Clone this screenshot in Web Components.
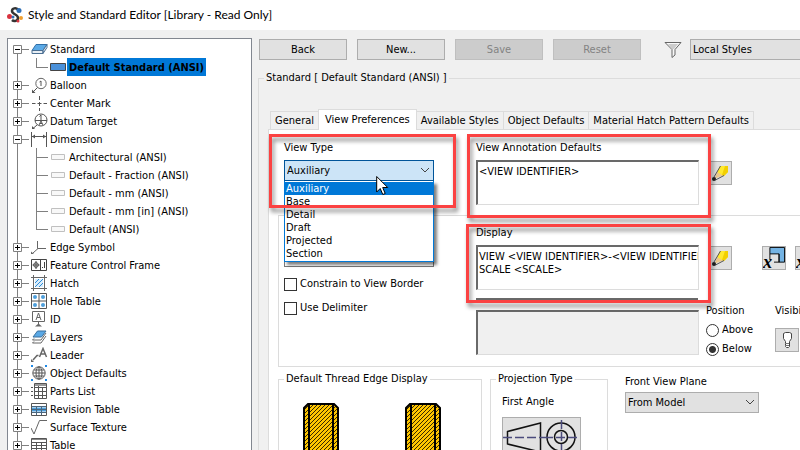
<!DOCTYPE html>
<html lang="en">
<head>
<meta charset="utf-8">
<title>Style and Standard Editor</title>
<style>
:root {
    --line: #dcdcdc;
    --face: #e1e1e1;
    --edge: #adadad;
    --accent: #0078d7;
}

body {
    margin: 0;
    height: 100vh;
    overflow: hidden;
    background: #f0f0f0;
    color: #000;
    font: 11px/14px "DejaVu Sans Condensed", "DejaVu Sans", sans-serif;
}
</style>
</head>
<body>
<style-editor></style-editor>

<script>
const ICONS = {
    standard: `<path d="M5 3.500h11l-4 6H1z" fill="#5aa9e6" stroke="#2f6fa8"/><path d="M1 9.500v3h11v-3zM12 9.500l4-6v3l-4 6z" fill="#e8eef4" stroke="#4b6f92"/>`,
    style_on: `<path d="M.5 4.500h15v7H.5z" fill="#4a90d9" stroke="#444"/>`,
    style_off: `<path d="M1.500 5.500h13v5h-13z" fill="#f8f8f8" stroke="#c0c0c0"/>`,
    balloon: `<circle cx="10" cy="6.500" r="5.200" fill="none" stroke="#666"/><path d="M8.500 5l1.500-1v5M6.500 10.500L2 15" fill="none" stroke="#555"/><path d="M1 12.500V16h3.500z" fill="#555"/>`,
    center: `<path d="M8.500 1v4M8.500 7v4M8.500 13v3M1 8.500h3.500M6.500 8.500h4M12.500 8.500H16" stroke="#555" fill="none"/>`,
    datum: `<circle cx="10" cy="7" r="6" fill="none" stroke="#555"/><path d="M4 7.500h12M10 2v5M8.500 3.500L10 2M6 12l-4 3.500M8 12l2-4 2 4M9 10.500h2" fill="none" stroke="#555"/><path d="M1 13v3h3z" fill="#555"/>`,
    dimension: `<path d="M.5 1v15M15.500 1v15M1 5.500h14" stroke="#555"/><path d="M1 5.500l3-2v4zM15 5.500l-3-2v4z" fill="#555"/>`,
    edge: `<path d="M6.500 2v7.500H15M7 9.500L2 14" fill="none" stroke="#666"/><path d="M0 12.500V15h3z" fill="#666"/>`,
    fcf: `<path d="M.5 2.500h15v11H.5zM9.500 3v11M1.500 8h7M5 4v8" fill="none" stroke="#444"/><circle cx="5" cy="8" r="2.300" fill="none" stroke="#444"/><path d="M13.500 5v6M11 10.500h1" stroke="#444"/>`,
    hatch: `<path d="M2.500 0v16M13.500 0v16M0 2.500h16M0 13.500h16" stroke="#666"/><path d="M4 4h8v8H4z" fill="#d8ecfb"/><path d="M4 8l4-4M4 12l8-8M8 12l4-4" stroke="#2d8bd6"/>`,
    hole: `<path d="M.5.5h15v15H.5zM8 1v15M1 8h15" fill="none" stroke="#555"/><g fill="#4d9fdc"><circle cx="4" cy="4" r="2"/><circle cx="12" cy="4" r="2"/><circle cx="4" cy="12" r="2"/><circle cx="12" cy="12" r="2"/></g>`,
    id: `<path d="M1.500.5h12v10h-12zM7.500 11v4M5 9l2.500-7L10 9M6 6.500h3" fill="none" stroke="#666"/><path d="M4 15.500l3.500-3 3.500 3z" fill="#666"/>`,
    layers: `<path d="M3 12.500L1.500 14h8.500l5-7M3 9.500L1.500 11h8.500l5-7" fill="none" stroke="#666"/><path d="M6.500 2H15l-4.500 6H2z" fill="#5aa9e6" stroke="#3b6f9c"/>`,
    leader: `<path d="M8.500 10L12 1.500 15.500 10M10 7h4M7.500 8.500H6L2 13" fill="none" stroke="#666" stroke-width="1.500"/><path d="M0 12v3h3z" fill="#666"/>`,
    object: `<circle cx="8" cy="8" r="6.200" fill="none" stroke="#555"/><ellipse cx="8" cy="8" rx="3" ry="6.200" fill="none" stroke="#555"/><path d="M8 2v12M2 8h12M3 5h10M3 11h10" stroke="#555"/><path d="M0 0h2v2H0zM14 0h2v2h-2zM0 14h2v2H0zM14 14h2v2h-2z" fill="#1e88e5"/>`,
    parts: `<path d="M3.500.5h12v15h-12zM7.500 1v15M11.500 5v11M4 4.500h12M4 8.500h12M4 12.500h12" fill="none" stroke="#555"/><path d="M4 1h11v2H4z" fill="#999"/><path d="M0 4.500h2M0 8.500h2M0 12.500h2" stroke="#555"/>`,
    revision: `<path d="M.5 2.500h15v12H.5z" fill="#fff" stroke="#555"/><path d="M1 6.500h14v4H1z" fill="#4d9fdc"/><path d="M1 5.500h14M1 11.500h14M5.500 5v9M10.500 5v9M1 8.500h14" stroke="#4a6780"/>`,
    surface: `<path d="M0 9l3 6L8.500 1.500H16" fill="none" stroke="#666"/>`,
    table: `<path d="M.5 1.500h15v13H.5zM1 5.500h15M1 8.500h15M1 11.500h15M5.500 5v10M10.500 5v10" fill="none" stroke="#555"/><path d="M1 2h14v1H1z" fill="#888"/>`
};

const TREE = [
    { icon: "standard", text: "Standard", open: true, children: [
        { icon: "style_on", text: "Default Standard (ANSI)", selected: true }
    ]},
    { icon: "balloon", text: "Balloon" },
    { icon: "center", text: "Center Mark" },
    { icon: "datum", text: "Datum Target" },
    { icon: "dimension", text: "Dimension", open: true, children: [
        { icon: "style_off", text: "Architectural (ANSI)" },
        { icon: "style_off", text: "Default - Fraction (ANSI)" },
        { icon: "style_off", text: "Default - mm (ANSI)" },
        { icon: "style_off", text: "Default - mm [in] (ANSI)" },
        { icon: "style_off", text: "Default (ANSI)" }
    ]},
    { icon: "edge", text: "Edge Symbol" },
    { icon: "fcf", text: "Feature Control Frame" },
    { icon: "hatch", text: "Hatch" },
    { icon: "hole", text: "Hole Table" },
    { icon: "id", text: "ID" },
    { icon: "layers", text: "Layers" },
    { icon: "leader", text: "Leader" },
    { icon: "object", text: "Object Defaults" },
    { icon: "parts", text: "Parts List" },
    { icon: "revision", text: "Revision Table" },
    { icon: "surface", text: "Surface Texture" },
    { icon: "table", text: "Table" }
];

class BaseElement extends HTMLElement {
    connectedCallback() {
        if (!this.shadowRoot) {
            this.attachShadow({mode: "open"}).innerHTML = this.render();
        }
    }

    attr(name) {
        return (this.getAttribute(name) || "").replace(/&/g, "&amp;").replace(/</g, "&lt;").replace(/"/g, "&quot;");
    }
}

class TitleBar extends BaseElement {
    render() {
        return `
        <style>
        :host {
            display: flex;
            align-items: center;
            gap: 5px;
            flex: none;
            height: 30px;
            padding-left: 7px;
            background: #fff;
            font: 12px/16px Lato, "Noto Sans", sans-serif;
        }
        svg { flex: none; }
        </style>
        <svg width="16" height="18" viewBox="0 0 16 18">
            <path d="M11 3.500C9 1.500 5 2 5 5c0 3.500 6 3 6 7 0 3-4 4-6 2" fill="none" stroke="#333" stroke-width="2.500"/>
            <circle cx="12" cy="4.500" r="2.500" fill="#2f6fb5"/>
            <circle cx="2.500" cy="10.500" r="2.500" fill="#d9333f"/>
            <circle cx="6" cy="11" r="1.500" fill="#2f6fb5"/>
            <circle cx="14" cy="12" r="2" fill="#f0a030"/>
            <circle cx="11" cy="15" r="1.500" fill="#d9333f"/>
        </svg>
        <span><slot></slot></span>`;
    }
}

class TreeNode extends BaseElement {
    // rail: connector lines and the expander box
    rail() {
        const first = this.hasAttribute("first");
        if (!this.hasAttribute("child")) {
            const plus = this.hasAttribute("open") ? "" : "M9.500 7v5";
            return `<svg width="23" height="18" fill="none" stroke="#808080" aria-hidden="true">
                <path d="M9.500 ${first ? 9 : 0}V18M14 9.500h7"/>
                <path d="M5.500 5.500h8v8h-8z" fill="#fff"/>
                <path d="M7 9.500h5${plus}" stroke="#000"/>
            </svg>`;
        }
        return `<svg width="42" height="18" fill="none" stroke="#808080" aria-hidden="true">
            <path d="M9.500 0V18M28.500 0V${this.hasAttribute("last") ? 10 : 18}M28.500 9.500H40"/>
        </svg>`;
    }

    render() {
        return `
        <style>
        :host {
            display: flex;
            align-items: center;
            height: 18px;
            white-space: nowrap;
        }
        svg { flex: none; }
        span {
            padding: 1px 2px 0;
            line-height: 17px;
        }
        :host([aria-selected="true"]) span {
            background: var(--accent);
            font-weight: 700;
        }
        </style>
        ${this.rail()}
        <svg width="17" height="16" viewBox="0 0 17 16" aria-hidden="true">${ICONS[this.getAttribute("icon")]}</svg>
        <span><slot></slot></span>`;
    }
}

class StyleTree extends BaseElement {
    render() {
        let rows = "";
        TREE.forEach((item, i) => {
            rows += `<tree-node role="treeitem" icon="${item.icon}" ${item.open ? "open" : ""} ${i == 0 ? "first" : ""}>${item.text}</tree-node>`;
            (item.children || []).forEach((child, n) => {
                rows += `<tree-node role="treeitem" child icon="${child.icon}" ${child.selected ? 'aria-selected="true"' : ""} ${n == item.children.length - 1 ? "last" : ""}>${child.text}</tree-node>`;
            });
        });
        return `
        <style>
        :host {
            display: block;
            flex: none;
            width: 243px;
            padding-top: 1px;
            overflow: hidden;
            border: 1px solid #828790;
            border-bottom: none;
            background: #fff;
        }
        </style>
        ${rows}`;
    }
}

class PushButton extends BaseElement {
    render() {
        return `
        <style>
        :host { display: block; flex: none; width: 88px; height: 21px; }
        :host([icon]) { width: 24px; height: 24px; }
        :host([large]) { width: 79px; height: 44px; }
        button {
            display: flex;
            align-items: center;
            justify-content: center;
            box-sizing: border-box;
            width: 100%;
            height: 100%;
            padding: 0;
            border: 1px solid var(--edge);
            border-radius: 0;
            background: var(--face);
            color: inherit;
            font: inherit;
        }
        button:disabled {
            border-color: #bfbfbf;
            background: #ccc;
            color: #838383;
        }
        </style>
        <button type="button" aria-label="${this.attr("label")}" ${this.hasAttribute("disabled") ? "disabled" : ""}><slot></slot></button>`;
    }
}

class SelectBox extends BaseElement {
    render() {
        const value = this.attr("value");
        const list = this.attr("options").split(",").filter(Boolean);
        return `
        <style>
        :host {
            display: flex;
            flex-direction: column;
            gap: 5px;
            flex: none;
            white-space: nowrap;
        }
        .box { position: relative; display: flex; }
        select {
            appearance: none;
            box-sizing: border-box;
            width: 100%;
            height: 21px;
            padding: 0 20px 0 2px;
            border: 1px solid var(--edge);
            border-radius: 0;
            background: var(--face);
            color: inherit;
            font: inherit;
        }
        .box > svg { position: absolute; right: 4px; top: 7px; }
        :host([open]) select { border-color: #005499; background: #cce4f7; }
        :host([plain]) select { border-color: #7a7a7a; background: #fff; }
        ul {
            position: absolute;
            z-index: 2;
            top: 21px;
            left: 0;
            right: 0;
            margin: 0;
            padding: 1px 0;
            border: 1px solid var(--accent);
            border-top: none;
            list-style: none;
            background: #fff;
            box-shadow: 3px 3px 3px rgba(0,0,0,.5);
        }
        li { padding-left: 1px; line-height: 13px; }
        li[aria-selected="true"] { background: var(--accent); color: #fff; }
        </style>
        ${this.hasAttribute("label") ? `<label for="s">${this.attr("label")}</label>` : ""}
        <div class="box">
            <select id="s" aria-label="${this.attr("label") || this.attr("name")}"><option>${value}</option></select>
            <svg width="10" height="7" fill="none" stroke="#444"><path d="M1 1l4 4 4-4"/></svg>
            ${list.length ? `<ul role="listbox">${list.map(o => `<li role="option" aria-selected="${o == value}">${o}</li>`).join("")}</ul>` : ""}
        </div>`;
    }
}

class TextBox extends BaseElement {
    render() {
        return `
        <style>
        :host {
            display: flex;
            flex-direction: column;
            gap: 5px;
            flex: none;
            width: 223px;
        }
        textarea {
            display: block;
            box-sizing: border-box;
            width: 100%;
            height: 45px;
            margin: 0;
            padding: 3px 1px;
            overflow: hidden;
            resize: none;
            border: 1px solid var(--line);
            border-top: 2px solid #696969;
            border-left: 2px solid #696969;
            border-radius: 0;
            outline: none;
            background: #fff;
            color: inherit;
            font: inherit;
            line-height: 13px;
            white-space: pre;
        }
        textarea:disabled { background: #f0f0f0; }
        </style>
        ${this.hasAttribute("label") ? `<label for="t">${this.attr("label")}</label>` : ""}
        <textarea id="t" spellcheck="false" aria-label="${this.attr("label") || this.attr("name")}" ${this.hasAttribute("disabled") ? "disabled" : ""}>${this.attr("value")}</textarea>`;
    }
}

class CheckItem extends BaseElement {
    render() {
        const type = this.getAttribute("type") || "checkbox";
        return `
        <style>
        :host { display: block; white-space: nowrap; }
        label { display: flex; align-items: center; gap: 3px; height: 14px; }
        input {
            appearance: none;
            box-sizing: border-box;
            flex: none;
            width: 13px;
            height: 13px;
            margin: 0;
            border: 1px solid #333;
            background: #fff;
        }
        input[type="radio"] { border-radius: 50%; }
        input:checked { background: radial-gradient(circle, #333 3px, #fff 4px); }
        </style>
        <label><input type="${type}" ${this.hasAttribute("checked") ? "checked" : ""}><slot></slot></label>`;
    }
}

class GroupBox extends BaseElement {
    render() {
        return `
        <style>
        :host { display: block; }
        fieldset {
            box-sizing: border-box;
            min-width: 0;
            height: 100%;
            margin: 0;
            padding: 0;
            border: 1px solid var(--line);
        }
        legend { margin-left: 5px; padding: 0 2px; white-space: nowrap; }
        .content { padding: var(--pad, 0); }
        </style>
        <fieldset>
            ${this.hasAttribute("label") ? `<legend>${this.attr("label")}</legend>` : ""}
            <div class="content"><slot></slot></div>
        </fieldset>`;
    }
}

class TabStrip extends BaseElement {
    render() {
        const active = this.getAttribute("active");
        return `
        <style>
        :host {
            display: flex;
            align-items: flex-end;
            height: 20px;
            padding-left: 2px;
            position: relative;
        }
        button {
            box-sizing: border-box;
            flex: none;
            height: 18px;
            margin: 0 -1px 0 0;
            padding: 0 4px;
            border: 1px solid var(--line);
            border-bottom: none;
            border-radius: 0;
            background: #f0f0f0;
            color: inherit;
            font: inherit;
            white-space: nowrap;
        }
        button[aria-selected="true"] {
            height: 21px;
            margin-bottom: -1px;
            padding: 0 6px;
            background: #fff;
            z-index: 1;
        }
        </style>
        ${this.attr("tabs").split(",").map(t => `<button type="button" role="tab" aria-selected="${t == active}">${t}</button>`).join("")}`;
    }
}

// red frame that marks a part of the form
class CallOut extends BaseElement {
    render() {
        return `
        <style>
        :host {
            position: absolute;
            z-index: 4;
            box-sizing: border-box;
            border: 3px solid #fb4242;
            filter: drop-shadow(2px 4px 2px rgba(0,0,0,.45));
            pointer-events: none;
        }
        </style>`;
    }
}

class ViewPreferences extends BaseElement {
    render() {
        const pencil = `<svg width="18" height="20" viewBox="0 0 18 20">
            <path d="M9 3h8v6l-4 4-5-1-2-3z" fill="#ffe92e"/><path d="M14 3h3v6l-4 4-2-1z" fill="#f2cf00"/>
            <path d="M6 9l6 3.500-8 3z" fill="#ecc98c"/><path d="M9.500 3L3 14M13 12.500L4.500 17" stroke="#555" fill="none"/>
            <circle cx="3" cy="16" r="2" fill="#222"/></svg>`;
        const symbol = `<svg width="24" height="24" viewBox="0 0 24 24">
            <path d="M7.500.5h16v16h-6v-9h-10z" fill="#74b3e3" stroke="#000"/><path d="M17.500 7.500v9H12M7.500 7.500v6" fill="none" stroke="#000"/>
            <text x="0" y="23" font-family="Liberation Serif, serif" font-size="20" font-weight="700" font-style="italic">x</text></svg>`;
        const thread = `<svg width="36" height="60" viewBox="0 0 36 60">
            <defs><pattern id="h" width="4" height="4" patternUnits="userSpaceOnUse"><path d="M-1 5L5-1M-1 1L1-1M3 5L5 3" stroke="#000" stroke-width=".8"/></pattern></defs>
            <path d="M1 60V5l4-4h26l4 4v55z" fill="#ffc600"/><path d="M1 60V5l4-4h26l4 4v55z" fill="url(#h)" stroke="#000" stroke-width="2"/>
            <path d="M6 1v59M30 1v59" stroke="#000" stroke-width="2"/></svg>`;
        return `
        <style>
        :host {
            display: block;
            position: relative;
            padding: 11px 9px 0;
            border: 1px solid var(--line);
            border-bottom: none;
            background: #fff;
        }
        .row { display: flex; }
        .top { padding-left: 6px; gap: 42px; margin-bottom: 10px; }
        .middle { gap: 42px; }
        .middle-box { --pad: 10px 0 10px 5px; }
        .type { width: 150px; }
        .left {
            display: flex;
            flex-direction: column;
            gap: 10px;
            flex: none;
            width: 150px;
            padding-top: 20px;
        }
        .edit { gap: 9px; }
        .edit push-button { margin-top: 20px; }
        .edit push-button.symbol { margin-left: 21px; }
        .edit push-button.symbol + .symbol { margin-left: 0; }
        .bar { width: 222px; height: 2px; margin: 8px 0 4px; background: #696969; }
        .options { gap: 7px; }
        .options text-box { margin-top: 6px; }
        .stack { display: flex; flex-direction: column; gap: 5px; width: 62px; }
        .stack span { white-space: nowrap; }
        .stack push-button { margin-top: 5px; }
        .bottom { margin-top: 5px; align-items: flex-start; }
        .bottom group-box { height: 120px; flex: none; }
        .thread { width: 204px; margin-right: 8px; --pad: 17px 24px; }
        .projection { width: 118px; margin-right: 17px; --pad: 9px 11px; }
        .threads { display: flex; gap: 66px; }
        .projection push-button { margin-top: 8px; }
        .plane { width: 134px; gap: 3px; padding-top: 3px; }
        .view-type { left: 0; top: 4px; width: 187px; height: 74px; }
        .annotation { left: 198px; top: 4px; width: 244px; height: 84px; }
        .display { left: 197px; top: 94px; width: 245px; height: 79px; }
        .pointer { position: absolute; z-index: 5; left: 107px; top: 45px; }
        </style>
        <div class="row top">
            <select-box class="type" open label="View Type" value="Auxiliary" options="Auxiliary,Base,Detail,Draft,Projected,Section"></select-box>
            <div class="row edit">
                <text-box label="View Annotation Defaults" value="<VIEW IDENTIFIER>"></text-box>
                <push-button icon label="Edit annotation">${pencil}</push-button>
            </div>
        </div>
        <group-box class="middle-box">
            <div class="row middle">
                <div class="left">
                    <select-box plain name="Label style" value=""></select-box>
                    <check-item>Constrain to View Border</check-item>
                    <check-item>Use Delimiter</check-item>
                </div>
                <div>
                    <div class="row edit">
                        <text-box label="Display" value="VIEW <VIEW IDENTIFIER>-<VIEW IDENTIFIER>&#10;SCALE <SCALE>"></text-box>
                        <push-button icon label="Edit display">${pencil}</push-button>
                        <push-button class="symbol" icon label="Scale symbol">${symbol}</push-button>
                        <push-button class="symbol" icon label="Label symbol">${symbol}</push-button>
                    </div>
                    <div class="bar"></div>
                    <div class="row options">
                        <text-box name="Preview" disabled></text-box>
                        <div class="stack">
                            <span>Position</span>
                            <check-item type="radio">Above</check-item>
                            <check-item type="radio" checked>Below</check-item>
                        </div>
                        <div class="stack">
                            <span>Visibility</span>
                            <push-button icon label="Visibility"><svg width="14" height="18" viewBox="0 0 14 18"><path d="M3.500 2.500l2-1h4l2 1v5l-2 3v5l-1 1h-2l-1-1v-5l-2-3z" fill="#fff" stroke="#444"/><path d="M5 12.500h4M5 14.500h4" stroke="#777"/></svg></push-button>
                        </div>
                    </div>
                </div>
            </div>
        </group-box>
        <div class="row bottom">
            <group-box class="thread" label="Default Thread Edge Display">
                <div class="threads">${thread}${thread}</div>
            </group-box>
            <group-box class="projection" label="Projection Type">
                First Angle
                <push-button large label="First Angle"><svg width="77" height="42" viewBox="0 0 77 42" fill="none" stroke="#111">
                    <path d="M4.500 13.500L37.500 5v29L4.500 26z" stroke-width="1.500"/><circle cx="58" cy="19" r="14" stroke-width="1.500"/><circle cx="58" cy="19" r="6.500" stroke-width="1.500"/>
                    <path d="M0 19.500h42M41 19.500h34M58.500 2v34" stroke="#4b4b7d" stroke-width="1.500" stroke-dasharray="9 3"/></svg></push-button>
            </group-box>
            <select-box class="plane" label="Front View Plane" value="From Model"></select-box>
        </div>
        <call-out class="view-type"></call-out>
        <call-out class="annotation"></call-out>
        <call-out class="display"></call-out>
        <svg class="pointer" width="13" height="21" viewBox="0 0 13 21"><path d="M.7 1.500v15.500l3.500-3.500 2.600 6 2.400-1-2.500-6h5z" fill="#fff" stroke="#000"/></svg>`;
    }
}

class StyleEditor extends BaseElement {
    render() {
        return `
        <style>
        :host {
            display: flex;
            flex-direction: column;
            height: 100vh;
        }
        .body {
            display: flex;
            flex: 1;
            min-height: 0;
            gap: 5px;
            padding: 8px 0 0 7px;
            overflow: hidden;
        }
        /* the form runs on past the edge of the window */
        main {
            flex: 1;
            min-width: 0;
            margin-right: -40px;
        }
        .toolbar {
            display: flex;
            align-items: center;
            gap: 10px;
            padding: 1px 0 11px 2px;
        }
        .toolbar svg { flex: none; margin: 0 -2px 0 13px; }
        .filter { flex: 1; }
        .standard { --pad: 24px 0 0 9px; padding-left: 1px; }
        </style>
        <title-bar>Style and Standard Editor [Library - Read Only]</title-bar>
        <div class="body">
            <style-tree role="tree"></style-tree>
            <main>
                <div class="toolbar">
                    <push-button label="Back">Back</push-button>
                    <push-button label="New">New...</push-button>
                    <push-button label="Save" disabled>Save</push-button>
                    <push-button label="Reset" disabled>Reset</push-button>
                    <svg width="18" height="18" viewBox="0 0 18 18"><path d="M1 1.500h16l-6 7v5.500l-3 2.500V8.500z" fill="#f8f8f8" stroke="#666"/><path d="M4 3h10l-4 5H8z" fill="#ccc"/></svg>
                    <select-box class="filter" name="Filter" value="Local Styles"></select-box>
                </div>
                <group-box class="standard" label="Standard [ Default Standard (ANSI) ]">
                    <tab-strip role="tablist" active="View Preferences" tabs="General,View Preferences,Available Styles,Object Defaults,Material Hatch Pattern Defaults"></tab-strip>
                    <view-preferences></view-preferences>
                </group-box>
            </main>
        </div>`;
    }
}

customElements.define("title-bar", TitleBar);
customElements.define("tree-node", TreeNode);
customElements.define("style-tree", StyleTree);
customElements.define("push-button", PushButton);
customElements.define("select-box", SelectBox);
customElements.define("text-box", TextBox);
customElements.define("check-item", CheckItem);
customElements.define("group-box", GroupBox);
customElements.define("tab-strip", TabStrip);
customElements.define("call-out", CallOut);
customElements.define("view-preferences", ViewPreferences);
customElements.define("style-editor", StyleEditor);
</script>
</body>
</html>
